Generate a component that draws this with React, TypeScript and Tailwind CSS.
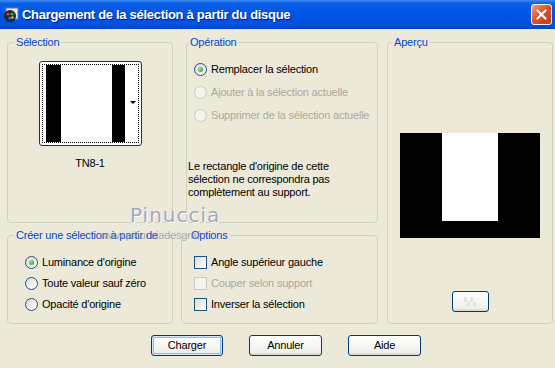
import type { ReactNode } from 'react'

const LABEL = 'text-[#0046D5]'

function Group({ title, className, legendClass, children }: { title: string; className?: string; legendClass?: string; children?: ReactNode }) {
  return (
    <fieldset className={`border border-[#D0D0BF] rounded-[4px] min-w-0 ${className ?? ''}`}>
      <legend className={`px-[2px] leading-[13px] ${LABEL} ${legendClass ?? 'ml-[6px]'}`}>{title}</legend>
      {children}
    </fieldset>
  )
}

function Radio({ label, checked, disabled }: { label: string; checked?: boolean; disabled?: boolean }) {
  return (
    <div className="flex items-center h-[13px]">
      <span
        className={`w-[13px] h-[13px] rounded-full border flex items-center justify-center ${
          disabled
            ? 'border-[#CAC8BB] bg-[#F4F3EC]'
            : 'border-[#1C5180] bg-[linear-gradient(135deg,#DCDCD4,#FFFFFF)]'
        }`}
      >
        {checked && <span className="w-[5px] h-[5px] rounded-full bg-[radial-gradient(circle_at_35%_35%,#8BE28B,#21A121)]" />}
      </span>
      <span className={`ml-[4px] leading-[13px] ${disabled ? 'text-[#ACA899]' : 'text-black'}`}>{label}</span>
    </div>
  )
}

function Check({ label, disabled }: { label: string; disabled?: boolean }) {
  return (
    <div className="flex items-center h-[13px]">
      <span
        className={`w-[13px] h-[13px] border ${
          disabled
            ? 'border-[#CAC8BB] bg-[#F4F3EC]'
            : 'border-[#1C5180] bg-[linear-gradient(135deg,#DCDCD4,#FFFFFF)]'
        }`}
      />
      <span className={`ml-[4px] leading-[13px] ${disabled ? 'text-[#ACA899]' : 'text-black'}`}>{label}</span>
    </div>
  )
}

function XpButton({ children, primary, className }: { children?: ReactNode; primary?: boolean; className?: string }) {
  return (
    <button
      className={`h-[21px] rounded-[3px] border border-[#003C74] bg-[linear-gradient(#FFFFFF,#F0F0EA_85%,#D6D0C5)] text-black leading-none ${
        primary ? 'shadow-[inset_0_0_0_1px_#CEE7FF,inset_0_0_0_2px_#98B8EA]' : ''
      } ${className ?? ''}`}
    >
      {children}
    </button>
  )
}

export default function App() {
  return (
    <div className="relative w-[555px] h-[368px] bg-[#ECE9D8] overflow-hidden font-['Liberation_Sans',Arial,sans-serif] text-[11px] tracking-[-0.2px] text-black">
      {/* title bar */}
      <div className="h-[29px] flex items-center bg-[linear-gradient(#3D8CF5,#0A5EE6_12%,#0055E5_50%,#0050DC_85%,#0042C0)]">
        <svg width="16" height="16" viewBox="0 0 16 16" className="ml-[3px]">
          <rect x="3" y="1" width="12" height="11" fill="#E8ECF2" stroke="#5C7EA8" />
          <circle cx="7" cy="9" r="6" fill="#202630" />
          <circle cx="5" cy="7" r="1.6" fill="#E23B3B" />
          <circle cx="9" cy="7" r="1.6" fill="#2FB34A" />
          <circle cx="7" cy="11" r="1.6" fill="#3B6BE2" />
          <circle cx="9.5" cy="10.5" r="1.2" fill="#F2C230" />
        </svg>
        <span className="ml-[3px] text-white font-bold text-[13px] tracking-[-0.3px] [text-shadow:1px_1px_0_#0A1E78]">
          Chargement de la sélection à partir du disque
        </span>
        <div className="ml-auto mr-[3px] w-[21px] h-[21px] rounded-[3px] border border-white bg-[linear-gradient(135deg,#F0A080,#E0532B_45%,#C23A12)] flex items-center justify-center">
          <svg width="11" height="11" viewBox="0 0 11 11">
            <path d="M1.5 1.5 L9.5 9.5 M9.5 1.5 L1.5 9.5" stroke="white" strokeWidth="2" strokeLinecap="square" />
          </svg>
        </div>
      </div>

      {/* body */}
      <div className="flex pl-[7px] pt-[7px]">
        <div className="w-[166px] flex flex-col gap-[6px]">
          <Group title="Sélection" className="h-[187px]">
            <div className="flex flex-col items-center">
              <div className="mt-[12px] w-[103px] h-[85px] rounded-[3px] border border-[#003C74] bg-white p-[2px]">
                <div className="relative w-full h-full border border-dotted border-black flex items-stretch pl-[3px] pr-[1px]">
                  <div className="w-[15px] bg-black" />
                  <div className="w-[51px] bg-white" />
                  <div className="w-[13px] bg-black" />
                  <div className="flex-1 bg-white" />
                  <span className="absolute right-[2px] top-[36px] w-0 h-0 border-l-[3px] border-r-[3px] border-t-[3px] border-l-transparent border-r-transparent border-t-black" />
                </div>
              </div>
              <div className="mt-[11px] leading-[13px]">TN8-1</div>
            </div>
          </Group>
          <Group title="Créer une sélection à partir de" className="h-[95px]">
            <div className="pl-[17px] pt-[14px] flex flex-col gap-[8px]">
              <Radio label="Luminance d'origine" checked />
              <Radio label="Toute valeur sauf zéro" />
              <Radio label="Opacité d'origine" />
            </div>
          </Group>
        </div>

        <div className="ml-[8px] w-[197px] flex flex-col gap-[6px]">
          <Group title="Opération" legendClass="ml-[1px]" className="h-[187px] ml-[5px]">
            <div className="pl-[7px] pt-[14px] flex flex-col gap-[10px]">
              <Radio label="Remplacer la sélection" checked />
              <Radio label="Ajouter à la sélection actuelle" disabled />
              <Radio label="Supprimer de la sélection actuelle" disabled />
            </div>
            <p className="mt-[38px] pl-[1px] leading-[13px]">
              Le rectangle d'origine de cette
              <br />
              sélection ne correspondra pas
              <br />
              complètement au support.
            </p>
          </Group>
          <Group title="Options" legendClass="ml-[7px]" className="h-[95px]">
            <div className="pl-[12px] pt-[14px] flex flex-col gap-[8px]">
              <Check label="Angle supérieur gauche" />
              <Check label="Couper selon support" disabled />
              <Check label="Inverser la sélection" />
            </div>
          </Group>
        </div>

        <Group title="Aperçu" legendClass="ml-[4px]" className="ml-[9px] w-[166px] h-[288px]">
          <div className="flex flex-col items-center">
            <div className="mt-[84px] w-[140px] h-[105px] bg-black flex justify-center">
              <div className="w-[56px] h-[88px] bg-white" />
            </div>
            <XpButton className="mt-[53px] w-[37px] h-[19px] bg-[linear-gradient(#FFFFFF,#EDEDE8_60%,#D9D5CC)] flex items-center justify-center">
              <span className="grid grid-cols-4 w-[12px] h-[9px] opacity-40">
                <span className="bg-[#C8C8C8]" />
                <span />
                <span className="bg-[#C8C8C8]" />
                <span />
                <span />
                <span className="bg-[#C8C8C8]" />
                <span />
                <span className="bg-[#C8C8C8]" />
              </span>
            </XpButton>
          </div>
        </Group>
      </div>

      {/* dialog buttons */}
      <div className="flex pl-[151px] mt-[11px] gap-[26px]">
        <XpButton primary className="w-[72px]">Charger</XpButton>
        <XpButton className="w-[73px]">Annuler</XpButton>
        <XpButton className="w-[73px]">Aide</XpButton>
      </div>

      {/* watermark */}
      <div className="absolute left-[130px] top-[204px] text-[20px] leading-[22px] tracking-[1px] text-[#A3A8C0] font-['DejaVu_Sans',sans-serif] [text-shadow:1px_1px_0_#FFFFFF]">
        Pinuccia
      </div>
      <div className="absolute left-[100px] top-[229px] text-[11px] leading-[13px] text-[#8A8E9C]/70">
        www.pinucciadesgraf
      </div>
    </div>
  )
}
